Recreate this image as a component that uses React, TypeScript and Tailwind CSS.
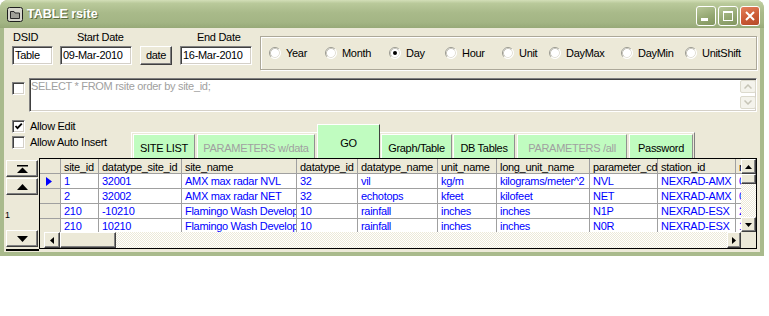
import React from "react";

const RAISED =
  "border border-t-white border-l-white border-r-[#404040] border-b-[#404040] shadow-[inset_-1px_-1px_0_#808080] bg-[#ece9d8]";
const SUNKEN =
  "border border-t-[#808080] border-l-[#808080] border-r-white border-b-white shadow-[inset_1px_1px_0_#404040,inset_-1px_-1px_0_#d4d0c8]";
const DITHER =
  "bg-[repeating-conic-gradient(#ffffff_0%_25%,#ece9d8_0%_50%)] bg-[length:2px_2px]";

function CheckBox({ checked = false }: { checked?: boolean }) {
  return (
    <div className={`w-[13px] h-[13px] shrink-0 bg-white flex items-center justify-center ${SUNKEN}`}>
      {checked && (
        <svg width="9" height="9" viewBox="0 0 9 9">
          <polyline points="1.5,4 3.5,6.2 7.8,1.6" fill="none" stroke="#000" strokeWidth="1.8" />
        </svg>
      )}
    </div>
  );
}

function Radio({ on = false }: { on?: boolean }) {
  return (
    <svg width="12" height="12" viewBox="0 0 12 12" className="shrink-0">
      <circle cx="6" cy="6" r="5.5" fill="#fff" />
      <path d="M2.11 9.89A5.5 5.5 0 0 1 9.89 2.11" fill="none" stroke="#9a9a90" />
      <path d="M2.82 9.18A4.5 4.5 0 0 1 9.18 2.82" fill="none" stroke="#c8c6bc" />
      <path d="M9.89 2.11A5.5 5.5 0 0 1 2.11 9.89" fill="none" stroke="#ffffff" />
      <path d="M9.18 2.82A4.5 4.5 0 0 1 2.82 9.18" fill="none" stroke="#e4e2d8" />
      {on && <circle cx="6" cy="6" r="2" fill="#000" />}
    </svg>
  );
}

function Tri({ dir }: { dir: "up" | "down" | "left" | "right" }) {
  const pts =
    dir === "up"
      ? "0,4 3.5,0 7,4"
      : dir === "down"
      ? "0,0 7,0 3.5,4"
      : dir === "left"
      ? "4,0 4,7 0,3.5"
      : "0,0 0,7 4,3.5";
  const w = dir === "up" || dir === "down" ? 7 : 4;
  const h = dir === "up" || dir === "down" ? 4 : 7;
  return (
    <svg width={w} height={h} viewBox={`0 0 ${w} ${h}`}>
      <polygon points={pts} fill="#000" />
    </svg>
  );
}

const radios = [
  { label: "Year", w: "w-[56px]" },
  { label: "Month", w: "w-[64px]" },
  { label: "Day", w: "w-[56px]", on: true },
  { label: "Hour", w: "w-[57px]" },
  { label: "Unit", w: "w-[47px]" },
  { label: "DayMax", w: "w-[72px]" },
  { label: "DayMin", w: "w-[64px]" },
  { label: "UnitShift", w: "w-[60px]" },
];

const tabs = [
  { label: "SITE LIST", cls: "w-[62px] ml-[1px]" },
  { label: "PARAMETERS w/data", cls: "w-[118px] ml-[2px]", dim: true },
  { label: "GO", cls: "w-[63px] ml-[2px]", active: true },
  { label: "Graph/Table", cls: "w-[71px] ml-[1px]" },
  { label: "DB Tables", cls: "w-[62px] ml-[1px]" },
  { label: "PARAMETERS /all", cls: "w-[110px] ml-[2px]", dim: true },
  { label: "Password", cls: "w-[64px] ml-[2px]" },
];

const cols = [
  { w: "w-[38px]", h: "site_id" },
  { w: "w-[83px]", h: "datatype_site_id" },
  { w: "w-[115px]", h: "site_name" },
  { w: "w-[61px]", h: "datatype_id" },
  { w: "w-[80px]", h: "datatype_name" },
  { w: "w-[59px]", h: "unit_name" },
  { w: "w-[93px]", h: "long_unit_name" },
  { w: "w-[68px]", h: "parameter_cd" },
  { w: "w-[78px]", h: "station_id" },
  { w: "w-[30px]", h: "rfc" },
];

const rows = [
  ["1", "32001", "AMX max radar NVL", "32", "vil", "kg/m", "kilograms/meter^2", "NVL", "NEXRAD-AMX", "0"],
  ["2", "32002", "AMX max radar NET", "32", "echotops", "kfeet", "kilofeet", "NET", "NEXRAD-AMX", "0"],
  ["210", "-10210", "Flamingo Wash Development", "10", "rainfall", "inches", "inches", "N1P", "NEXRAD-ESX", "2"],
  ["210", "10210", "Flamingo Wash Development", "10", "rainfall", "inches", "inches", "N0R", "NEXRAD-ESX", "1"],
];

function TitleBar() {
  return (
    <div className="h-[28px] shrink-0 flex items-center rounded-t-[8px] bg-[linear-gradient(180deg,#d3dfb8_0%,#b9c99a_12%,#a9ba8a_45%,#a3b584_80%,#97a978_100%)]">
      <svg width="16" height="15" viewBox="0 0 16 15" className="ml-[7px] mt-[1px]">
        <rect x="0.5" y="0.5" width="15" height="14" rx="2" fill="#d6d6cc" stroke="#1e1e1e" />
        <path d="M3.5 4.5h3.5l1 1.5h4.5v5.5h-9z" fill="#a0a098" stroke="#2a2a2a" />
      </svg>
      <span className="ml-[4px] mt-[1px] text-white font-bold text-[12.5px] tracking-[0px] [text-shadow:1px_1px_0_#5b6b3e]">
        TABLE rsite
      </span>
      <div className="ml-auto mr-[4px] flex gap-[2px] self-start mt-[6px]">
        <div className="w-[20px] h-[20px] rounded-[3px] border border-white bg-[linear-gradient(160deg,#b7c698_0%,#95a873_55%,#82955f_100%)] flex">
          <svg width="18" height="18" viewBox="0 0 18 18">
            <rect x="4" y="11" width="7" height="3" fill="#fff" />
          </svg>
        </div>
        <div className="w-[20px] h-[20px] rounded-[3px] border border-white bg-[linear-gradient(160deg,#b7c698_0%,#95a873_55%,#82955f_100%)] flex">
          <svg width="18" height="18" viewBox="0 0 18 18">
            <rect x="4.5" y="4.5" width="9" height="9" fill="none" stroke="#fff" />
            <rect x="4" y="4" width="10" height="2" fill="#fff" />
          </svg>
        </div>
        <div className="w-[20px] h-[20px] rounded-[3px] border border-white bg-[linear-gradient(160deg,#e3805c_0%,#cc5a36_55%,#b44a28_100%)] flex">
          <svg width="18" height="18" viewBox="0 0 18 18">
            <path d="M5 5L13 13M13 5L5 13" stroke="#fff" strokeWidth="2" />
          </svg>
        </div>
      </div>
    </div>
  );
}

function Grid() {
  return (
    <div className="w-[718px] h-[91px] shrink-0 border border-black bg-white flex flex-col">
      <div className="flex h-[73px]">
        <div className="w-[701px] overflow-hidden flex flex-col">
          <div className="flex shrink-0">
            <div className="w-[21px] h-[15px] shrink-0 border-r border-b border-[#a0a0a0] bg-[#ece9d8]" />
            {cols.map((c) => (
              <div
                key={c.h}
                className={`${c.w} h-[15px] shrink-0 border-r border-b border-[#a0a0a0] bg-[#ece9d8] pl-[3px] pt-[2px] leading-[12px] whitespace-nowrap overflow-hidden`}
              >
                {c.h}
              </div>
            ))}
          </div>
          {rows.map((r, i) => (
            <div key={i} className="flex shrink-0">
              <div className="w-[21px] h-[15px] shrink-0 border-r border-b border-[#a0a0a0] bg-[#ece9d8] flex items-center pl-[6px]">
                {i === 0 && (
                  <svg width="6" height="9" viewBox="0 0 6 9">
                    <polygon points="0,0 6,4.5 0,9" fill="#0000ff" />
                  </svg>
                )}
              </div>
              {r.map((v, j) => (
                <div
                  key={j}
                  className={`${cols[j].w} h-[15px] shrink-0 border-r border-b border-[#a0a0a0] pl-[3px] pt-[1px] leading-[12px] text-[#0000ff] whitespace-nowrap overflow-hidden`}
                >
                  {v}
                </div>
              ))}
            </div>
          ))}
        </div>
        <div className="w-[15px] shrink-0 flex flex-col">
          <div className={`h-[15px] shrink-0 flex items-center justify-center ${RAISED}`}>
            <Tri dir="up" />
          </div>
          <div className={`h-[10px] shrink-0 ${RAISED}`} />
          <div className={`flex-1 ${DITHER}`} />
          <div className={`h-[15px] shrink-0 flex items-center justify-center ${RAISED}`}>
            <Tri dir="down" />
          </div>
        </div>
      </div>
      <div className="flex h-[16px]">
        <div className="w-[701px] flex bg-[#ece9d8]">
          <div className="w-[4px] shrink-0" />
          <div className={`w-[16px] shrink-0 flex items-center justify-center ${RAISED}`}>
            <Tri dir="left" />
          </div>
          <div className={`w-[56px] shrink-0 ${RAISED}`} />
          <div className={`flex-1 ${DITHER}`} />
          <div className={`w-[14px] shrink-0 flex items-center justify-center ${RAISED}`}>
            <Tri dir="right" />
          </div>
        </div>
        <div className="w-[15px] bg-[#ece9d8]" />
      </div>
    </div>
  );
}

export default function App() {
  return (
    <div className="w-[769px] h-[316px] bg-white font-['Liberation_Sans',Arial,sans-serif] text-[11px] tracking-[-0.3px] leading-[13px] text-black overflow-hidden">
      <div className="w-[764px] h-[256px] flex flex-col bg-[#a9ba8c] rounded-t-[8px]">
        <TitleBar />
        <div className="flex-1 mx-[4px] mb-[4px] bg-[#ece9d8] flex flex-col min-h-0">
          {/* top row */}
          <div className="flex items-start h-[42px] shrink-0">
            <div className="w-[256px] shrink-0 flex flex-col">
              <div className="flex mt-[3px] h-[13px]">
                <span className="ml-[9px] w-[64px]">DSID</span>
                <span className="w-[120px]">Start Date</span>
                <span>End Date</span>
              </div>
              <div className="flex mt-[2px] h-[19px]">
                <div className={`ml-[8px] w-[41px] h-[19px] bg-white pl-[2px] flex items-center ${SUNKEN}`}>Table</div>
                <div className={`ml-[7px] w-[72px] h-[19px] bg-white pl-[2px] flex items-center ${SUNKEN}`}>09-Mar-2010</div>
                <div className={`ml-[8px] w-[32px] h-[19px] flex items-center justify-center ${RAISED}`}>date</div>
                <div className={`ml-[8px] w-[72px] h-[19px] bg-white pl-[2px] flex items-center ${SUNKEN}`}>16-Mar-2010</div>
              </div>
            </div>
            <div className="mt-[8px] w-[497px] h-[34px] border border-[#aca899] shadow-[inset_1px_1px_0_#fff,1px_1px_0_#fff] flex items-center pl-[8px]">
              {radios.map((r) => (
                <div key={r.label} className={`${r.w} shrink-0 flex items-center`}>
                  <Radio on={r.on} />
                  <span className="ml-[5px]">{r.label}</span>
                </div>
              ))}
            </div>
          </div>

          {/* SQL row */}
          <div className="flex mt-[8px] h-[34px] shrink-0">
            <div className="ml-[8px] mt-[4px]">
              <CheckBox />
            </div>
            <div className={`ml-[4px] w-[728px] h-[34px] bg-white flex ${SUNKEN}`}>
              <div className="flex-1 pl-[1px] pt-[1px] text-[#a0a0a0]">SELECT * FROM rsite order by site_id;</div>
              <div className="flex flex-col gap-[3px] mt-[1px]">
                <div className="w-[16px] h-[13px] rounded-[2px] border border-[#dcdacd] bg-[#f4f3ec] flex items-center justify-center">
                  <svg width="8" height="5" viewBox="0 0 8 5">
                    <polyline points="0.5,4.5 4,1 7.5,4.5" fill="none" stroke="#c6c4b6" strokeWidth="1.5" />
                  </svg>
                </div>
                <div className="w-[16px] h-[13px] rounded-[2px] border border-[#dcdacd] bg-[#f4f3ec] flex items-center justify-center">
                  <svg width="8" height="5" viewBox="0 0 8 5">
                    <polyline points="0.5,0.5 4,4 7.5,0.5" fill="none" stroke="#c6c4b6" strokeWidth="1.5" />
                  </svg>
                </div>
              </div>
            </div>
          </div>

          {/* checkboxes + tabs */}
          <div className="flex h-[46px] shrink-0">
            <div className="w-[127px] shrink-0 flex flex-col pt-[8px] gap-[3px]">
              <div className="flex items-center ml-[8px] h-[13px]">
                <CheckBox checked />
                <span className="ml-[5px]">Allow Edit</span>
              </div>
              <div className="flex items-center ml-[8px] h-[13px]">
                <CheckBox />
                <span className="ml-[5px]">Allow Auto Insert</span>
              </div>
            </div>
            <div className="self-end w-[564px] h-[26px] shrink-0 border-t border-l border-r border-t-white border-l-white border-r-[#808080] flex items-end">
              {tabs.map((t) => (
                <div
                  key={t.label}
                  className={`${t.cls} ${t.active ? "h-[34px] border-r-[#404040]" : "h-[24px] border-r-[#909090]"} shrink-0 bg-[#c0fcc0] border-t border-l border-r border-t-white border-l-white flex items-center justify-center pt-[4px] whitespace-nowrap ${t.dim ? "text-[#a0a0a0]" : "text-black"}`}
                >
                  {t.label}
                </div>
              ))}
            </div>
          </div>

          {/* nav + grid */}
          <div className="flex flex-1 min-h-0">
            <div className="w-[35px] shrink-0 flex flex-col pl-[2px]">
              <div className={`mt-[2px] w-[32px] h-[17px] flex items-center justify-center ${RAISED}`}>
                <svg width="11" height="8" viewBox="0 0 11 8">
                  <rect x="0" y="0" width="11" height="1.5" fill="#000" />
                  <polygon points="0,8 5.5,2.5 11,8" fill="#000" />
                </svg>
              </div>
              <div className={`mt-[1px] w-[32px] h-[17px] flex items-center justify-center ${RAISED}`}>
                <svg width="11" height="6" viewBox="0 0 11 6">
                  <polygon points="0,6 5.5,0 11,6" fill="#000" />
                </svg>
              </div>
              <div className="flex-1 flex items-center pt-[6px] -ml-[1px] text-[9px] leading-[9px]">1</div>
              <div className={`w-[32px] h-[17px] flex items-center justify-center ${RAISED}`}>
                <svg width="11" height="6" viewBox="0 0 11 6">
                  <polygon points="0,0 11,0 5.5,6" fill="#000" />
                </svg>
              </div>
              <div className="mt-[2px] mb-[1px] h-[2px] w-[33px] bg-black" />
            </div>
            <Grid />
          </div>
        </div>
      </div>
    </div>
  );
}
